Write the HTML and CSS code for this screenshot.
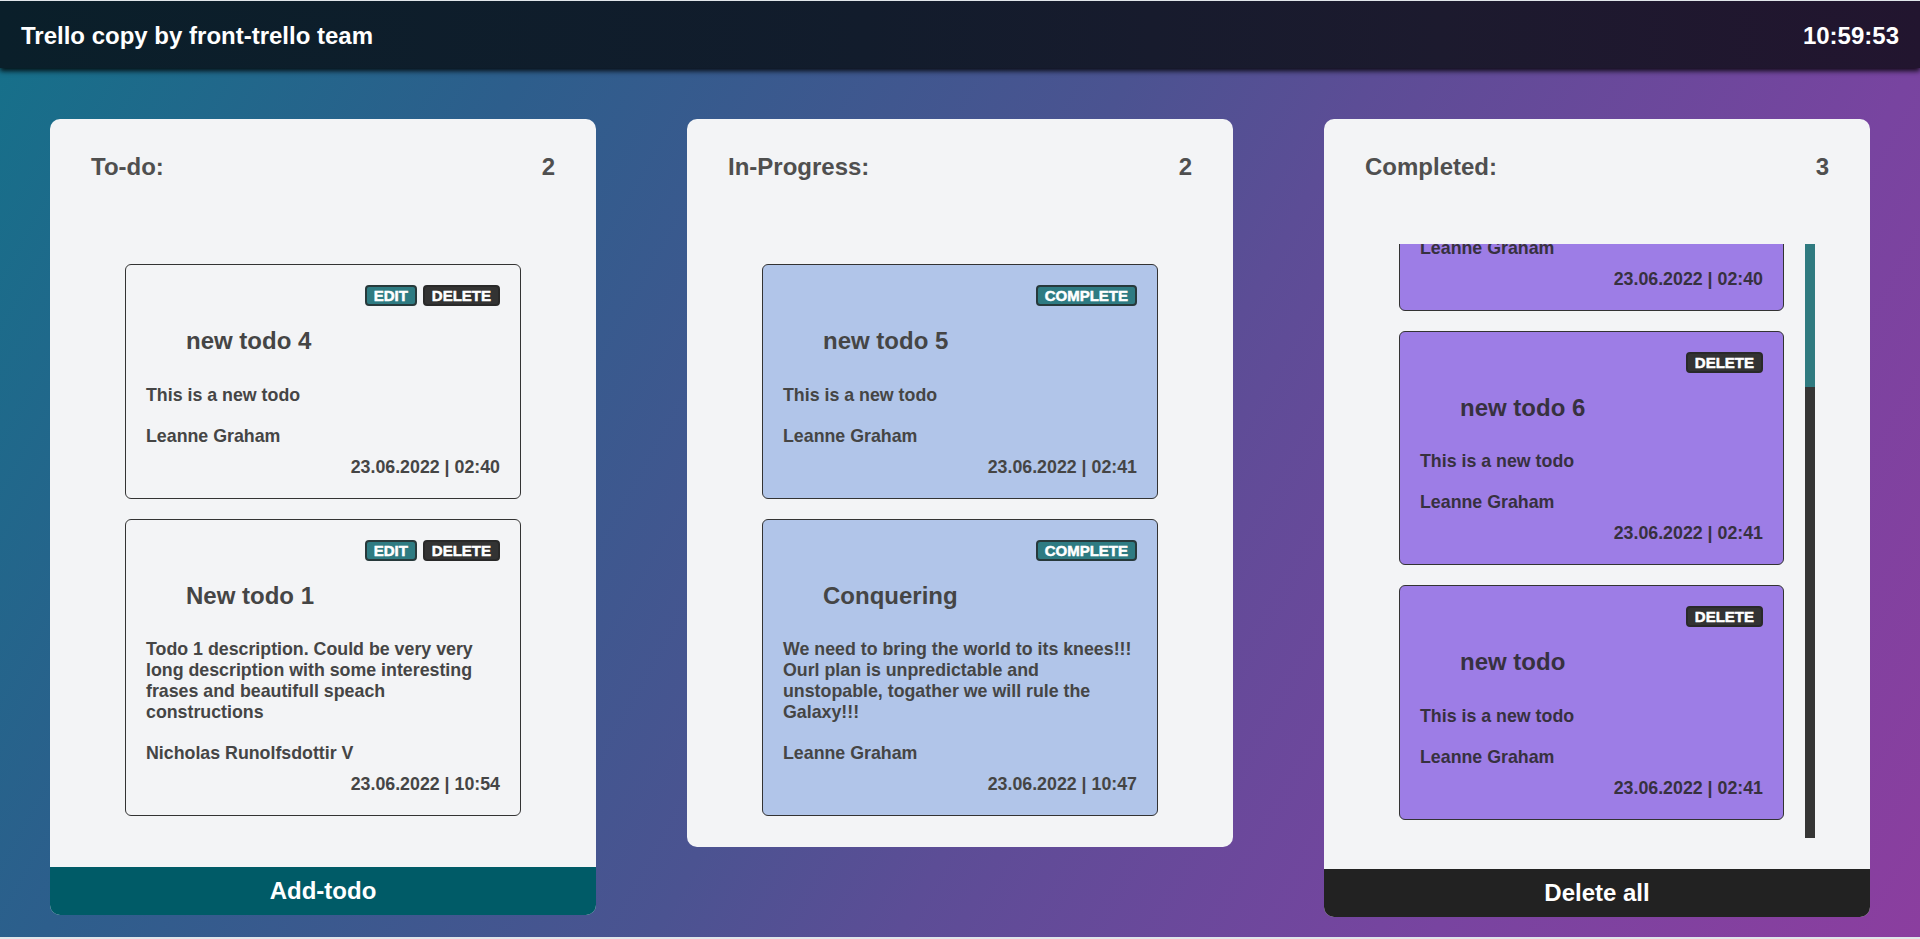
FILE: index.html
```html
<!DOCTYPE html>
<html lang="en">
<head>
<meta charset="utf-8">
<title>Trello copy</title>
<link rel="stylesheet" href="styles.css">
</head>
<body>
<div class="app">
  <header class="topbar">
    <h1 class="brand">Trello copy by front-trello team</h1>
    <span class="clock">10:59:53</span>
  </header>
  <main class="board">
    <section class="column">
      <div class="column-head"><h2 class="column-title">To-do:</h2><span class="column-count">2</span></div>
      <div class="list">
        <article class="card">
          <div class="card-actions"><button class="btn btn--teal">Edit</button><button class="btn btn--dark">Delete</button></div>
          <h3 class="card-title">new todo 4</h3>
          <p class="card-desc">This is a new todo</p>
          <p class="card-user">Leanne Graham</p>
          <p class="card-date">23.06.2022 | 02:40</p>
        </article>
        <article class="card">
          <div class="card-actions"><button class="btn btn--teal">Edit</button><button class="btn btn--dark">Delete</button></div>
          <h3 class="card-title">New todo 1</h3>
          <p class="card-desc">Todo 1 description. Could be very very long description with some interesting frases and beautifull speach constructions</p>
          <p class="card-user">Nicholas Runolfsdottir V</p>
          <p class="card-date">23.06.2022 | 10:54</p>
        </article>
      </div>
      <button class="column-btn column-btn--teal">Add-todo</button>
    </section>

    <section class="column">
      <div class="column-head"><h2 class="column-title">In-Progress:</h2><span class="column-count">2</span></div>
      <div class="list">
        <article class="card card--progress">
          <div class="card-actions"><button class="btn btn--teal">Complete</button></div>
          <h3 class="card-title">new todo 5</h3>
          <p class="card-desc">This is a new todo</p>
          <p class="card-user">Leanne Graham</p>
          <p class="card-date">23.06.2022 | 02:41</p>
        </article>
        <article class="card card--progress">
          <div class="card-actions"><button class="btn btn--teal">Complete</button></div>
          <h3 class="card-title">Conquering</h3>
          <p class="card-desc">We need to bring the world to its knees!!! Ourl plan is unpredictable and unstopable, togather we will rule the Galaxy!!!</p>
          <p class="card-user">Leanne Graham</p>
          <p class="card-date">23.06.2022 | 10:47</p>
        </article>
      </div>
    </section>

    <section class="column">
      <div class="column-head"><h2 class="column-title">Completed:</h2><span class="column-count">3</span></div>
      <div class="scroll-wrap">
        <div class="scroller">
          <div class="scroller-inner">
            <article class="card card--done">
              <div class="card-actions"><button class="btn btn--dark">Delete</button></div>
              <h3 class="card-title">new todo 3</h3>
              <p class="card-desc">This is a new todo</p>
              <p class="card-user">Leanne Graham</p>
              <p class="card-date">23.06.2022 | 02:40</p>
            </article>
            <article class="card card--done">
              <div class="card-actions"><button class="btn btn--dark">Delete</button></div>
              <h3 class="card-title">new todo 6</h3>
              <p class="card-desc">This is a new todo</p>
              <p class="card-user">Leanne Graham</p>
              <p class="card-date">23.06.2022 | 02:41</p>
            </article>
            <article class="card card--done">
              <div class="card-actions"><button class="btn btn--dark">Delete</button></div>
              <h3 class="card-title">new todo</h3>
              <p class="card-desc">This is a new todo</p>
              <p class="card-user">Leanne Graham</p>
              <p class="card-date">23.06.2022 | 02:41</p>
            </article>
          </div>
        </div>
        <div class="scrollbar" aria-hidden="true"><div class="scrollbar-thumb"></div></div>
      </div>
      <button class="column-btn column-btn--dark">Delete all</button>
    </section>
  </main>
</div>
</body>
</html>
```

FILE: styles.css
```css
html {
  background: #e1e6ea;
}

body {
  margin: 1px 0 2px;
  font-family: "Liberation Sans", Arial, sans-serif;
}

.app {
  height: 936px;
  overflow: hidden;
  background: linear-gradient(119deg, #15718a 0%, #2d5e8c 23%, #4b5391 48%, #5c4d96 58%, #7844a0 80%, #8b3e9f 100%);
}

.topbar {
  position: relative;
  z-index: 1;
  height: 67px;
  box-sizing: border-box;
  padding: 2px 21px 0;
  display: flex;
  align-items: center;
  justify-content: space-between;
  color: #fff;
  background: linear-gradient(90deg, #0a1f2a 0%, #121c2c 45%, #1c1a2e 75%, #22152f 100%);
  box-shadow: 0 3px 5px rgba(0, 0, 0, 0.85);
}

.brand {
  margin: 0;
  font-size: 24px;
  line-height: 27.6px;
  font-weight: 700;
}

.clock {
  font-size: 24px;
  line-height: 27.6px;
  font-weight: 700;
}

.board {
  display: flex;
  align-items: flex-start;
  gap: 91px;
  padding: 51px 50px 0;
}

.column {
  flex: none;
  width: 546px;
  display: flex;
  flex-direction: column;
  background: #f3f4f6;
  border-radius: 10px;
  overflow: hidden;
}

.column-head {
  height: 125px;
  box-sizing: border-box;
  padding: 34px 41px 0;
  display: flex;
  justify-content: space-between;
  align-items: flex-start;
  color: #4f4f4f;
  font-size: 24px;
  line-height: 27.6px;
  font-weight: 700;
}

.column-title {
  margin: 0;
  font-size: inherit;
  line-height: inherit;
}

.list {
  padding: 20px 0;
  margin-bottom: 11px;
  display: flex;
  flex-direction: column;
  align-items: center;
  gap: 20px;
}

.scroll-wrap {
  height: 594px;
  margin: 0 55px 11px 75px;
  display: flex;
}

.scroller {
  flex: 1;
  overflow-y: auto;
  scrollbar-width: none;
  display: flex;
  flex-direction: column-reverse;
}

.scroller::-webkit-scrollbar {
  display: none;
}

.scroller-inner {
  flex-shrink: 0;
  padding: 20px 21px 18px 0;
  display: flex;
  flex-direction: column;
  gap: 20px;
}

.scrollbar {
  flex: none;
  width: 10px;
  display: flex;
  flex-direction: column;
  justify-content: flex-end;
  background: #2f7a80;
}

.scrollbar-thumb {
  height: 76%;
  background: #353535;
}

.card {
  width: 396px;
  box-sizing: border-box;
  padding: 20px;
  border: 1px solid #333;
  border-radius: 6px;
  background: #f3f4f6;
  color: #454545;
  font-size: 17.8px;
  font-weight: 700;
}

.card--progress {
  background: #b1c5e9;
}

.card--done {
  width: auto;
  background: #9d7de6;
  color: #37313f;
}

.card-actions {
  height: 21px;
  display: flex;
  justify-content: flex-end;
  gap: 6px;
}

.btn {
  height: 21px;
  box-sizing: border-box;
  padding: 0 7px;
  border: 2px solid #333;
  border-radius: 4px;
  font-family: "Liberation Sans", Arial, sans-serif;
  font-size: 15px;
  line-height: 17px;
  font-weight: 700;
  text-transform: uppercase;
  color: #fff;
  -webkit-text-stroke: 0.5px #fff;
}

.btn--teal {
  background: #2e7b82;
  border-color: #27393b;
}

.btn--dark {
  background: #333;
  border-color: #292929;
}

.card-title {
  margin: 21px 0 30px;
  padding-left: 40px;
  font-size: 24px;
  line-height: 27.6px;
}

.card-desc {
  margin: 0 0 20px;
}

.card-user {
  margin: 0 0 10px;
}

.card-date {
  margin: 0;
  text-align: right;
}

.column-btn {
  margin-top: 20px;
  width: 100%;
  padding: 10px 0;
  border: none;
  font-family: "Liberation Sans", Arial, sans-serif;
  font-size: 24px;
  line-height: 27.6px;
  font-weight: 700;
  color: #fff;
}

.column-btn--teal {
  background: #005b67;
}

.column-btn--dark {
  background: #222;
}
```
